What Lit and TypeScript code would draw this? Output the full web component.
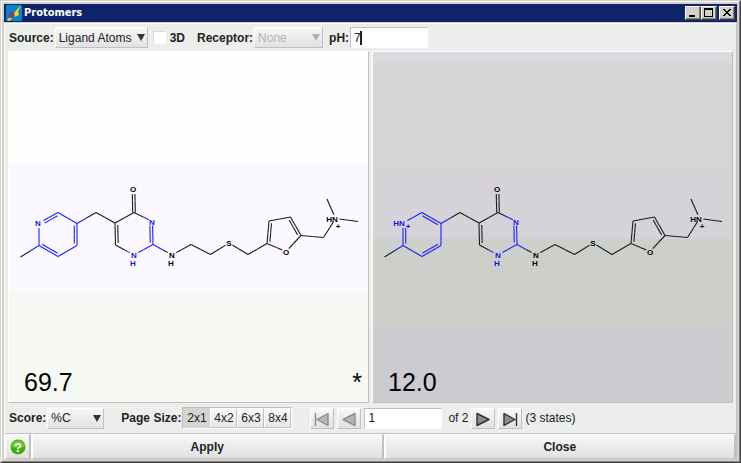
import { LitElement, html, css, svg } from "lit";
import { customElement } from "lit/decorators.js";

type Atom = { x: number; y: number; label?: string; lx?: number; blue?: boolean; r?: number };
type Bond = { a: number; b: number; inner?: [number, number]; twin?: boolean };

const PYRIDINE: [number, number] = [58, 234.5];
const PYRIMIDINE: [number, number] = [134.5, 233.5];
const FURAN: [number, number] = [283, 233];

const buildAtoms = (charged: boolean): Atom[] => [
  { x: 39, y: 223, label: charged ? "HN" : "N", lx: charged ? 35 : 38, blue: true, r: 5 },
  { x: 58, y: 212.5, blue: true },
  { x: 77, y: 223.5, blue: true },
  { x: 77, y: 245.5, blue: true },
  { x: 58, y: 256.5, blue: true },
  { x: 39, y: 245.5, blue: true },
  { x: 20.5, y: 257 },
  { x: 96, y: 212.5 },
  { x: 115, y: 223 },
  { x: 134, y: 212.5 },
  { x: 133.5, y: 189, label: "O", lx: 133, r: 5 },
  { x: 152.5, y: 221.5, label: "N", lx: 152, blue: true, r: 4 },
  { x: 153, y: 244.5, blue: true },
  { x: 134, y: 255, label: "N", blue: true, r: 5 },
  { x: 115.5, y: 245 },
  { x: 172, y: 255, label: "N", r: 5 },
  { x: 191, y: 244.5 },
  { x: 210.5, y: 254.5 },
  { x: 229, y: 243, label: "S", r: 4 },
  { x: 248, y: 254.5 },
  { x: 267, y: 243.5 },
  { x: 269, y: 221 },
  { x: 290.5, y: 217 },
  { x: 301, y: 235.5 },
  { x: 286, y: 251.5, label: "O", r: 4 },
  { x: 323.5, y: 237.5 },
  { x: 335.5, y: 218.5, label: "HN", lx: 332, r: 4 },
  { x: 327, y: 199 },
  { x: 358, y: 221.5 },
];

const buildBonds = (charged: boolean): Bond[] => [
  { a: 0, b: 1, inner: charged ? undefined : PYRIDINE },
  { a: 1, b: 2, inner: charged ? PYRIDINE : undefined },
  { a: 2, b: 3, inner: charged ? undefined : PYRIDINE },
  { a: 3, b: 4, inner: charged ? PYRIDINE : undefined },
  { a: 4, b: 5, inner: charged ? undefined : PYRIDINE },
  { a: 5, b: 0, inner: charged ? PYRIDINE : undefined },
  { a: 5, b: 6 },
  { a: 2, b: 7 },
  { a: 7, b: 8 },
  { a: 8, b: 9 },
  { a: 9, b: 10, twin: true },
  { a: 9, b: 11 },
  { a: 11, b: 12, inner: PYRIMIDINE },
  { a: 12, b: 13 },
  { a: 13, b: 14 },
  { a: 14, b: 8, inner: PYRIMIDINE },
  { a: 12, b: 15 },
  { a: 15, b: 16 },
  { a: 16, b: 17 },
  { a: 17, b: 18 },
  { a: 18, b: 19 },
  { a: 19, b: 20 },
  { a: 20, b: 21, inner: FURAN },
  { a: 21, b: 22 },
  { a: 22, b: 23, inner: FURAN },
  { a: 23, b: 24 },
  { a: 24, b: 20 },
  { a: 23, b: 25 },
  { a: 25, b: 26 },
  { a: 26, b: 27 },
  { a: 26, b: 28 },
];

@customElement("molecule-view")
class MoleculeView extends LitElement {
  static properties = { charged: { type: Boolean } };
  declare charged: boolean;

  static styles = css`
    :host { display: block; }
    svg { display: block; width: 100%; height: auto; }
    line { stroke-width: 1.1; }
    .blue { stroke: #1f1fff; }
    .black { stroke: #1c1c1c; }
    text { font: bold 8px "Liberation Sans", Arial, sans-serif; text-anchor: middle; fill: #000; }
    .bluetext { fill: #1010f0; }
  `;

  private segment(a: Atom, b: Atom, off: [number, number], trimA: number, trimB: number) {
    const len = Math.hypot(b.x - a.x, b.y - a.y);
    const ux = (b.x - a.x) / len;
    const uy = (b.y - a.y) / len;
    const x1 = a.x + ux * trimA + off[0];
    const y1 = a.y + uy * trimA + off[1];
    const x2 = b.x - ux * trimB + off[0];
    const y2 = b.y - uy * trimB + off[1];
    const mx = (a.x + b.x) / 2 + off[0];
    const my = (a.y + b.y) / 2 + off[1];
    return svg`
      <line class=${a.blue ? "blue" : "black"} x1=${x1} y1=${y1} x2=${mx} y2=${my}></line>
      <line class=${b.blue ? "blue" : "black"} x1=${mx} y1=${my} x2=${x2} y2=${y2}></line>`;
  }

  private bond(atoms: Atom[], bond: Bond) {
    const a = atoms[bond.a];
    const b = atoms[bond.b];
    const len = Math.hypot(b.x - a.x, b.y - a.y);
    let nx = -(b.y - a.y) / len;
    let ny = (b.x - a.x) / len;
    const ta = a.r ?? 0;
    const tb = b.r ?? 0;
    if (bond.twin) {
      return svg`${this.segment(a, b, [nx * 1.3, ny * 1.3], ta, tb)}${this.segment(a, b, [-nx * 1.3, -ny * 1.3], ta, tb)}`;
    }
    if (!bond.inner) return this.segment(a, b, [0, 0], ta, tb);
    const toward = (bond.inner[0] - a.x) * nx + (bond.inner[1] - a.y) * ny;
    if (toward < 0) {
      nx = -nx;
      ny = -ny;
    }
    return svg`${this.segment(a, b, [0, 0], ta, tb)}${this.segment(a, b, [nx * 2.7, ny * 2.7], Math.max(ta, 2), Math.max(tb, 2))}`;
  }

  render() {
    const atoms = buildAtoms(this.charged);
    return html`
      <svg viewBox="9 180 359 95" role="img" aria-label="Ligand structure">
        ${buildBonds(this.charged).map((b) => this.bond(atoms, b))}
        ${atoms.filter((a) => a.label).map(
          (a) => svg`<text class=${a.blue ? "bluetext" : ""} x=${a.lx ?? a.x} y=${a.y + 3}>${a.label}</text>`
        )}
        <text class="bluetext" x="133" y="266">H</text>
        <text x="171" y="266">H</text>
        <text x="338" y="229">+</text>
        ${this.charged ? svg`<text class="bluetext" x="44" y="229">+</text>` : ""}
      </svg>
    `;
  }
}

@customElement("app-root")
class AppRoot extends LitElement {
  static properties = { pageSize: { state: true } };
  declare pageSize: string;

  constructor() {
    super();
    this.pageSize = "2x1";
  }

  static styles = css`
    :host {
      display: block;
      font: 12px/14px "Liberation Sans", Arial, sans-serif;
      color: #222;
    }
    * { box-sizing: border-box; }
    button, input, select { font: inherit; color: inherit; margin: 0; border-radius: 0; }
    .window {
      min-height: 100vh;
      display: flex;
      flex-direction: column;
      background: #d4d0c8;
      border: 1px solid;
      border-color: #d4d0c8 #404040 #404040 #d4d0c8;
    }
    .frame {
      flex: 1;
      display: flex;
      flex-direction: column;
      padding: 2px;
      border: 1px solid;
      border-color: #fff #808080 #808080 #fff;
    }
    .title {
      display: flex;
      align-items: center;
      height: 18px;
      padding: 0 2px;
      background: #10246b;
      color: #fff;
    }
    .logo { width: 16px; height: 16px; }
    h1 {
      flex: 1;
      margin: 0 0 0 2px;
      font: bold 11px/16px "DejaVu Sans Condensed", "DejaVu Sans", sans-serif;
    }
    .win {
      width: 16px;
      height: 14px;
      padding: 0;
      background: #d4d0c8;
      border: 1px solid;
      border-color: #fff #404040 #404040 #fff;
      box-shadow: inset -1px -1px #808080;
    }
    .win svg { display: block; width: 14px; height: 12px; }
    .win.close { margin-left: 2px; }
    .body {
      flex: 1;
      display: flex;
      flex-direction: column;
      background: #eceeec;
      border: 1px solid;
      border-color: #d4d0c8 #c2c1c7 #d4d0c8 #fbfbf8;
      border-bottom: 0;
      box-shadow: inset 0 1px #fbfbf8;
    }
    .bar { display: flex; align-items: center; padding: 4px; }
    .top { padding-bottom: 3px; }
    .bar label, .caption { font-weight: bold; margin-right: 1px; white-space: nowrap; }
    .drop { position: relative; display: flex; }
    .drop::after {
      content: "";
      position: absolute;
      right: 3px;
      top: 7px;
      border: 4px solid transparent;
      border-top: 7px solid #333;
      border-bottom: 0;
      pointer-events: none;
    }
    .drop.off::after { border-top-color: #b0b0b0; }
    select, .nav, .action, .help {
      appearance: none;
      background: linear-gradient(#f7f7f7, #e1e1e4);
      border: 1px solid;
      border-color: #fff #c0bfc5 #c0bfc5 #fff;
      border-radius: 0;
    }
    select { height: 21px; padding: 0 3px; opacity: 1; }
    .source { width: 93px; }
    .receptor { width: 69px; color: #b4b4b4; }
    .score { width: 57px; }
    input[type="checkbox"] {
      appearance: none;
      width: 13px;
      height: 13px;
      margin: 0 4px 0 5px;
      background: #fff;
      border: 1px solid;
      border-color: #dadada #fff #fff #dadada;
    }
    .bar .three { margin-right: 12px; }
    .field { position: relative; display: flex; }
    .field input, .page {
      width: 78px;
      height: 21px;
      padding: 0 3px;
      background: #fefffe;
      border: 1px solid;
      border-color: #c0bfc5 #fff #fff #c0bfc5;
      outline: none;
    }
    .caret { position: absolute; left: 10px; top: 4px; width: 2px; height: 14px; background: #222; }
    .ph { margin-left: 6px; }
    .panels { flex: 1; display: grid; grid-template-columns: 1fr 1fr; gap: 3px; padding: 0 3px; }
    .panel {
      display: grid;
      min-width: 0;
      color: #000;
      border: 1px solid;
      border-color: #fff #c0bfc0 #c0bfc0 #fff;
    }
    .panel > * { grid-area: 1 / 1; }
    .first { background: linear-gradient(#fefffc 31.9%, #fbf9ff 31.9% 68.4%, #f6f8f4 68.4%); }
    .second {
      background: linear-gradient(#dcdae0 3.1%, #d4d6d3 3.1% 31.9%, #d5d2d8 31.9% 53.3%, #cdcfca 53.3% 78.3%, #cdcad0 78.3%);
    }
    molecule-view { align-self: center; }
    .value {
      align-self: end;
      display: flex;
      justify-content: space-between;
      padding: 0 6px 5px 15px;
      font-size: 25px;
      line-height: 30px;
    }
    .caption { margin-left: 17px; }
    .sizes { display: flex; margin-right: 18px; border: 1px solid; border-color: #c0bfc0 #fff #fff #c0bfc0; }
    .sizes button {
      width: 27px;
      height: 20px;
      padding: 0;
      background: linear-gradient(#f7f7f7, #e6e6e9);
      border: 1px solid;
      border-color: #fff #c0bfc5 #c0bfc5 #fff;
    }
    .sizes button[aria-pressed="true"] { background: #d3d5d1; border-color: #d3d5d1; }
    .nav { width: 24px; height: 21px; padding: 0; margin-right: 3px; }
    .nav svg { display: block; width: 22px; height: 19px; fill: #8c8c8c; stroke: #333; stroke-width: 1.4; stroke-linejoin: round; }
    .nav:disabled svg { fill: #b6b6b6; stroke: #8e8e8e; }
    .of { margin: 0 3px 0 6px; }
    .actions { display: grid; grid-template-columns: 26px 1fr 1fr; border-top: 1px solid #c0bfc5; }
    .action, .help { height: 25px; padding: 0; border-right-width: 2px; }
    .action { font-weight: bold; border-left-width: 2px; }
    .help svg { display: block; width: 16px; height: 16px; margin: auto; }
    .mark { font: bold 13px "Liberation Sans", sans-serif; fill: #fff; text-anchor: middle; }
  `;

  render() {
    return html`
      <main class="window">
        <div class="frame">
          <header class="title">
            <svg class="logo" viewBox="0 0 16 16" aria-hidden="true">
              <rect width="16" height="16" rx="1" fill="#0785c4"></rect>
              <path d="M15 0 12 7 13 10 8 12 3 16 1 15 6 10 9 7Z" fill="#ffd90a"></path>
              <circle cx="5.5" cy="10" r="3.2" fill="#6b4596"></circle>
            </svg>
            <h1>Protomers</h1>
            <button class="win" aria-label="Minimize">
              <svg viewBox="0 0 14 12"><path d="M3 8h6v2H3z"></path></svg>
            </button>
            <button class="win" aria-label="Maximize">
              <svg viewBox="0 0 14 12"><path fill-rule="evenodd" d="M2 1h9v9H2zM3 3v6h7V3z"></path></svg>
            </button>
            <button class="win close" aria-label="Close window">
              <svg viewBox="0 0 14 12"><path d="M3 2h2v1h1v1h2V3h1V2h2v1h-1v1H9v1H8v1h1v1h1v1h1v1H9V8H8V7H6v1H5v1H3V8h1V7h1V6h1V5H5V4H4V3H3z"></path></svg>
            </button>
          </header>

          <div class="body">
            <div class="bar top">
              <label for="source">Source:</label>
              <span class="drop"><select id="source" class="source"><option>Ligand Atoms</option></select></span>
              <input type="checkbox" id="three" />
              <label class="three" for="three">3D</label>
              <label for="receptor">Receptor:</label>
              <span class="drop off"><select id="receptor" class="receptor" disabled><option>None</option></select></span>
              <label class="ph" for="ph">pH:</label>
              <span class="field"><input id="ph" type="text" value="7" /><span class="caret"></span></span>
            </div>

            <div class="panels">
              <section class="panel first">
                <molecule-view></molecule-view>
                <div class="value"><span>69.7</span><span>*</span></div>
              </section>
              <section class="panel second">
                <molecule-view charged></molecule-view>
                <div class="value"><span>12.0</span></div>
              </section>
            </div>

            <div class="bar">
              <label for="score">Score:</label>
              <span class="drop"><select id="score" class="score"><option>%C</option></select></span>
              <span class="caption" id="sizes">Page Size:</span>
              <div class="sizes" role="group" aria-labelledby="sizes">
                ${["2x1", "4x2", "6x3", "8x4"].map(
                  (s) => html`<button aria-pressed=${s === this.pageSize} @click=${() => (this.pageSize = s)}>${s}</button>`
                )}
              </div>
              <button class="nav" aria-label="First page" disabled>
                <svg viewBox="0 0 22 19"><path d="M4.5 4v13M17 4.5v12L6 10.5z"></path></svg>
              </button>
              <button class="nav" aria-label="Previous page" disabled>
                <svg viewBox="0 0 22 19"><path d="M17 4.5v12L5 10.5z"></path></svg>
              </button>
              <input class="page" type="text" value="1" aria-label="Page" />
              <span class="of">of 2</span>
              <button class="nav" aria-label="Next page">
                <svg viewBox="0 0 22 19"><path d="M5 4.5v12L17 10.5z"></path></svg>
              </button>
              <button class="nav" aria-label="Last page">
                <svg viewBox="0 0 22 19"><path d="M5 4.5v12L16 10.5zM17.5 4v13"></path></svg>
              </button>
              <span>(3 states)</span>
            </div>

            <div class="actions">
              <button class="help" aria-label="Help">
                <svg viewBox="0 0 16 16">
                  <circle cx="8" cy="8" r="7.5" fill="#45ac0e"></circle>
                  <path d="M1.5 8a6.5 6.5 0 0 1 13 0Q8 10 1.5 8z" fill="#6cc832"></path>
                  <text class="mark" x="8" y="12.5">?</text>
                </svg>
              </button>
              <button class="action">Apply</button>
              <button class="action">Close</button>
            </div>
          </div>
        </div>
      </main>
    `;
  }
}
